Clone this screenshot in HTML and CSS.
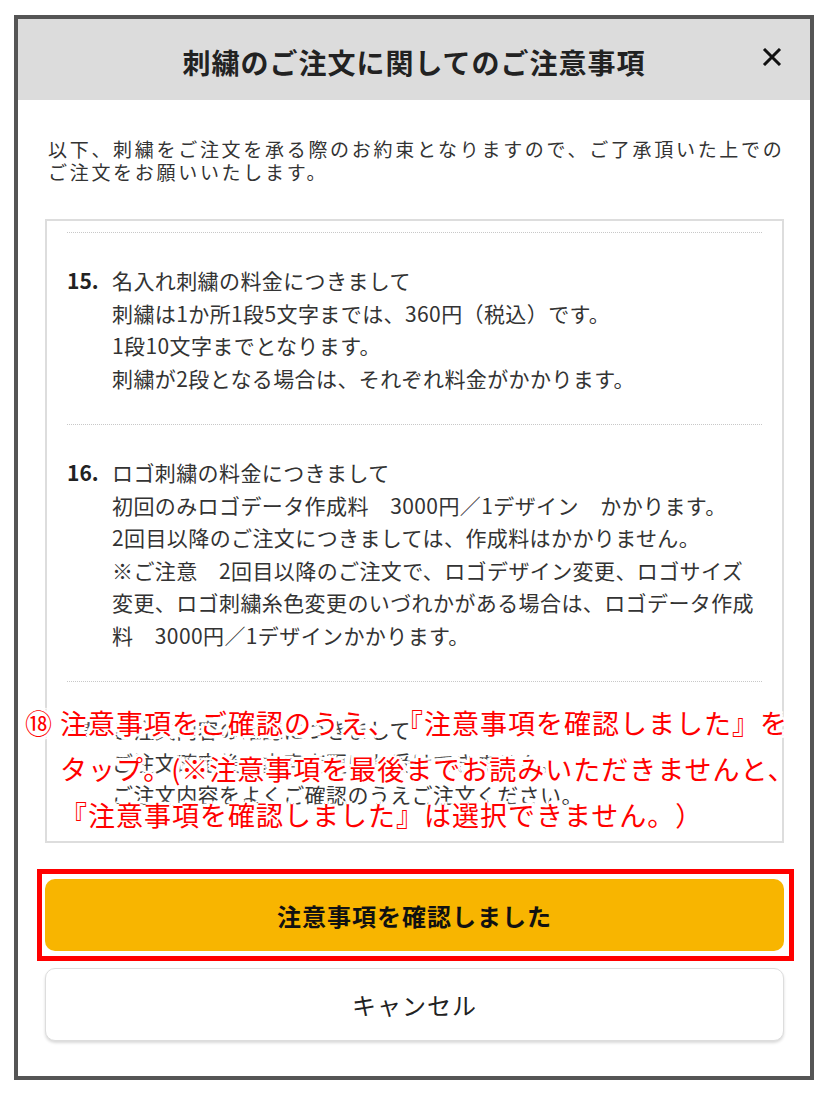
FILE: index.html
```html
<!DOCTYPE html>
<html lang="ja">
<head>
<meta charset="utf-8">
<title>刺繍のご注文に関してのご注意事項</title>
<link rel="stylesheet" href="styles.css">
</head>
<body>
<div class="modal">
  <header class="modal-head">
    <span class="head-spacer"></span>
    <h1 class="modal-title">刺繍のご注文に関してのご注意事項</h1>
    <button class="close" type="button" aria-label="閉じる">
      <svg width="20" height="18" viewBox="0 0 20 18"><path d="M2 1 L18 17 M18 1 L2 17" stroke="#111" stroke-width="3" stroke-linecap="butt" fill="none"/></svg>
    </button>
  </header>
  <div class="modal-body">
    <p class="intro">以下、刺繍をご注文を承る際のお約束となりますので、ご了承頂いた上での<br>ご注文をお願いいたします。</p>
    <div class="terms">
      <ol class="term-list">
        <li class="term">
          <span class="num">15.</span>
          <div class="term-text">名入れ刺繍の料金につきまして<br>刺繍は1か所1段5文字までは、360円（税込）です。<br>1段10文字までとなります。<br>刺繍が2段となる場合は、それぞれ料金がかかります。</div>
        </li>
        <li class="term">
          <span class="num">16.</span>
          <div class="term-text">ロゴ刺繍の料金につきまして<br>初回のみロゴデータ作成料　3000円／1デザイン　かかります。<br>2回目以降のご注文につきましては、作成料はかかりません。<br>※ご注意　2回目以降のご注文で、ロゴデザイン変更、ロゴサイズ<br>変更、ロゴ刺繍糸色変更のいづれかがある場合は、ロゴデータ作成<br>料　3000円／1デザインかかります。</div>
        </li>
        <li class="term">
          <span class="num">17.</span>
          <div class="term-text">ご注文内容の確認につきまして<br>ご注文確定後の内容変更はお受けできません。<br>ご注文内容をよくご確認のうえご注文ください。</div>
        </li>
      </ol>
    </div>
    <div class="actions">
      <button class="btn btn-primary" type="button">注意事項を確認しました</button>
      <button class="btn btn-secondary" type="button">キャンセル</button>
    </div>
  </div>
  <div class="note">
    <span class="note-num">⑱</span>
    <div class="note-text">注意事項をご確認のうえ、『注意事項を確認しました』を<br>タップ。(※注意事項を最後までお読みいただきませんと、<br>『注意事項を確認しました』は選択できません。）</div>
  </div>
  <div class="highlight"></div>
</div>
</body>
</html>
```

FILE: styles.css
```css
* { box-sizing: border-box; }
html, body { margin: 0; padding: 0; background: #fff; }
body {
  font-family: "Noto Sans CJK JP", "Noto Sans", sans-serif;
  color: #333;
  text-spacing-trim: space-all;
}
.modal {
  position: relative;
  margin: 15px 0 0 14px;
  width: 800px;
  height: 1065px;
  border: 4px solid #555;
  background: #fff;
  display: flex;
  flex-direction: column;
}
.modal-head {
  height: 81px;
  flex: none;
  background: #dcdcdc;
  display: grid;
  grid-template-columns: 1fr auto 1fr;
  align-items: center;
  padding: 0 28px;
}
.modal-title {
  margin: 5px 0 0;
  font-size: 28px;
  line-height: 1;
  font-weight: 700;
  letter-spacing: 1px;
  color: #222;
}
.close {
  justify-self: end;
  margin-top: -6px;
  padding: 0;
  border: 0;
  background: none;
  width: 20px;
  height: 18px;
  display: flex;
}
.modal-body {
  flex: 1;
  padding: 37px 26px 0 27px;
  display: flex;
  flex-direction: column;
}
.intro {
  margin: 0 0 0 3px;
  font-size: 19px;
  line-height: 23px;
  letter-spacing: 2.7px;
  white-space: nowrap;
  color: #333;
}
.terms {
  margin-top: 36px;
  height: 624px;
  flex: none;
  border: 2px solid #ddd;
  padding-top: 11px;
  overflow: hidden;
}
.term-list {
  list-style: none;
  margin: 0 20px;
  padding: 0;
}
.term {
  display: flex;
  border-top: 1px dotted #c8c8c8;
  padding: 31px 0 30px;
  font-size: 21px;
  line-height: 32.5px;
  letter-spacing: .4px;
  color: #333;
}
.num {
  flex: none;
  width: 45px;
  font-weight: 700;
  letter-spacing: 0;
  color: #222;
}
.term-text { white-space: nowrap; }
.actions {
  margin-top: 36px;
  display: flex;
  flex-direction: column;
  gap: 17px;
}
.btn {
  font-family: inherit;
  border-radius: 10px;
  width: 100%;
  cursor: pointer;
}
.btn-primary {
  height: 72px;
  border: 0;
  background: #f8b500;
  color: #111;
  font-size: 24px;
  font-weight: 700;
  letter-spacing: 1px;
}
.btn-secondary {
  height: 73px;
  border: 1px solid #ddd;
  background: #fff;
  box-shadow: 0 2px 3px rgba(0,0,0,.15);
  color: #222;
  font-size: 24px;
  font-weight: 400;
  letter-spacing: 1px;
}
.note {
  position: absolute;
  left: 7px;
  top: 681px;
  display: flex;
  color: #ff0000;
  font-size: 27px;
  line-height: 46px;
  letter-spacing: 1px;
  white-space: nowrap;
  text-shadow:
    3px 0 0 #fff, -3px 0 0 #fff, 0 3px 0 #fff, 0 -3px 0 #fff,
    3px 3px 0 #fff, -3px -3px 0 #fff, 3px -3px 0 #fff, -3px 3px 0 #fff,
    2px 0 0 #fff, -2px 0 0 #fff, 0 2px 0 #fff, 0 -2px 0 #fff,
    0 0 4px #fff, 0 0 6px #fff, 0 0 8px #fff;
}
.note-num {
  flex: none;
  width: 35px;
  letter-spacing: 0;
}
.highlight {
  position: absolute;
  left: 19px;
  top: 850px;
  width: 757px;
  height: 92px;
  border: 5px solid #ff0000;
  pointer-events: none;
}
```
